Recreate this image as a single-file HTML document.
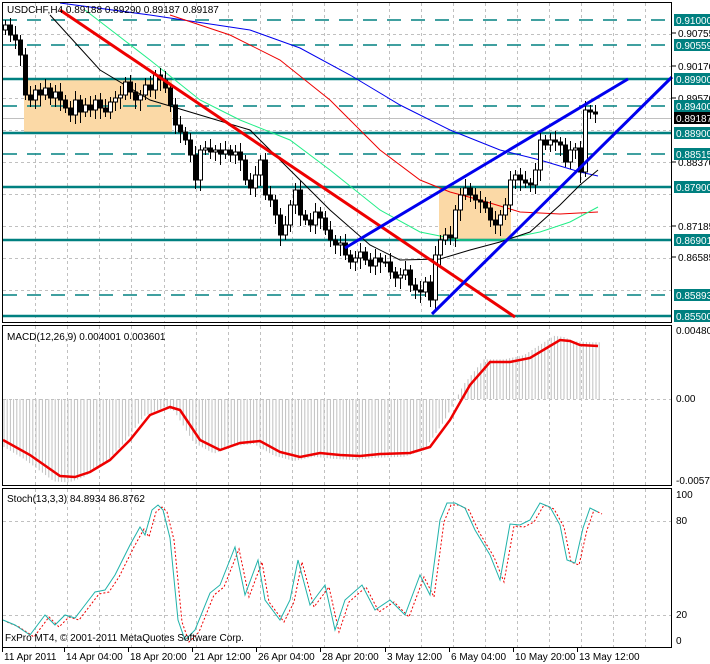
<!DOCTYPE html>
<html><head><meta charset="utf-8">
<style>
html,body{margin:0;padding:0;background:#fff;width:710px;height:664px;overflow:hidden}
svg{display:block}
text{font-family:"Liberation Sans",sans-serif;font-size:10px;fill:#000}
</style></head>
<body>
<svg id="s" width="710" height="664" xmlns="http://www.w3.org/2000/svg">
<rect x="0" y="0" width="710" height="664" fill="#fff"/>
<g id="grid"></g>
<!-- orange boxes -->
<rect x="24" y="79" width="148" height="54" fill="#fbd9a6"/>
<rect x="439" y="187" width="72" height="53" fill="#fbd9a6"/>
<g id="levels"></g>
<g id="mas" fill="none" stroke-width="1">
<polyline stroke="#0000ee" points="60,3 150,15 250,30 300,48 350,75 400,105 450,130 500,150 540,160 580,172 598,176"/>
<polyline stroke="#ee0000" points="170,15 230,35 280,60 330,100 380,150 420,180 450,192 480,200 520,212 560,214 598,212"/>
<polyline stroke="#22ee88" points="85,10 150,60 200,100 240,120 290,140 330,170 380,210 420,232 460,240 500,240 540,232 570,222 598,207"/>
<polyline stroke="#000" points="50,15 100,70 150,100 200,115 250,130 290,170 330,210 370,245 400,260 440,259 470,250 500,242 530,232 560,205 580,185 598,170"/>
</g>
<g id="candles"></g>
<!-- trend lines -->
<line x1="60" y1="10" x2="515" y2="317" stroke="#ee0000" stroke-width="3"/>
<line x1="345" y1="248" x2="628" y2="79" stroke="#0000ee" stroke-width="3"/>
<line x1="432" y1="314" x2="672" y2="77" stroke="#0000ee" stroke-width="3"/>
<g id="macd"></g>
<g id="stoch"></g>
<!-- panel borders -->
<rect x="2.5" y="2.5" width="669" height="320" fill="none" stroke="#000"/>
<rect x="2.5" y="325.5" width="669" height="160" fill="none" stroke="#000"/>
<rect x="2.5" y="488.5" width="669" height="159" fill="none" stroke="#000"/>
<text x="7" y="13">USDCHF,H4  0.89188 0.89290 0.89187 0.89187</text>
<text x="7" y="340">MACD(12,26,9) 0.004001 0.003601</text>
<text x="7" y="502">Stoch(13,3,3) 84.8934 86.8762</text>
<text x="5" y="641">FxPro MT4, © 2001-2011 MetaQuotes Software Corp.</text>
<g id="axis"></g>
</svg>
<script>
var NS="http://www.w3.org/2000/svg";
function el(p,t,a,txt){var e=document.createElementNS(NS,t);for(var k in a)e.setAttribute(k,a[k]);if(txt!==undefined)e.textContent=txt;document.getElementById(p).appendChild(e);return e;}
// vertical grid
var vx=[35,67,99,131,164,196,228,260,292,324,357,389,421,453,485,517,549,581,613,645];
vx.forEach(function(x){
 [[3,322],[326,485],[489,647]].forEach(function(r){el("grid","line",{x1:x+.5,y1:r[0],x2:x+.5,y2:r[1],stroke:"#c0c0c0","stroke-dasharray":"3,3"});});
});
[34,66,98,130,162,194,226,258,290].forEach(function(y){el("grid","line",{x1:3,y1:y+.5,x2:671,y2:y+.5,stroke:"#c0c0c0","stroke-dasharray":"3,3"});});
el("grid","line",{x1:3,y1:118.5,x2:671,y2:118.5,stroke:"#c0c0c0"});
[399,521,615].forEach(function(y){el("grid","line",{x1:3,y1:y+.5,x2:671,y2:y+.5,stroke:"#c0c0c0","stroke-dasharray":"3,3"});});
// levels
[79,133,187,240,316].forEach(function(y){el("levels","line",{x1:3,y1:y,x2:671,y2:y,stroke:"#008080","stroke-width":2.5});});
[20,45,106,154,295].forEach(function(y){el("levels","line",{x1:3,y1:y,x2:671,y2:y,stroke:"#008080","stroke-width":1.5,"stroke-dasharray":"14,10"});});
// candles
var pts=[[5,25],[10,35],[15,40],[20,55],[25,95],[30,100],[35,90],[40,95],[45,88],[50,98],[55,92],[60,100],[65,108],[70,115],[75,100],[80,112],[85,105],[90,110],[95,100],[100,108],[105,112],[110,102],[115,98],[120,95],[125,82],[130,92],[135,100],[140,95],[145,85],[150,90],[155,75],[160,80],[165,88],[170,105],[175,125],[180,132],[185,140],[190,155],[195,180],[200,150],[205,148],[210,152],[215,150],[220,154],[225,150],[230,155],[235,152],[240,160],[245,180],[250,188],[255,175],[260,160],[265,195],[270,200],[275,215],[280,235],[285,225],[290,205],[295,190],[300,215],[305,220],[310,225],[315,212],[320,218],[325,230],[330,240],[335,245],[340,243],[345,255],[350,262],[355,258],[360,252],[365,260],[370,266],[375,258],[380,262],[385,262],[390,272],[395,278],[400,275],[405,270],[410,285],[415,290],[420,292],[425,282],[430,300],[435,255],[440,240],[445,235],[450,238],[455,210],[460,195],[465,188],[470,195],[475,200],[480,202],[485,208],[490,220],[495,225],[500,215],[505,205],[510,180],[515,175],[520,180],[525,183],[530,185],[535,170],[540,140],[545,145],[550,140],[555,142],[560,145],[565,162],[570,150],[575,148],[580,172],[585,110],[590,112],[595,114]];
var prev=pts[0][1]+5;
pts.forEach(function(p,i){
 var o=prev,c=p[1],x=p[0];var top=Math.min(o,c),bot=Math.max(o,c);
 el("candles","line",{x1:x+.5,y1:top-5-(i%3)*2,x2:x+.5,y2:bot+5+(i%4)*2,stroke:"#000"});
 var h=Math.max(bot-top,1);
 el("candles","rect",{x:x-1.5,y:top,width:4,height:h,fill:(c>o?"#000":"#fff"),stroke:"#000","stroke-width":1});
 prev=c;
});
// MACD
var sig=[[3,440],[30,455],[60,476],[75,477],[90,472],[110,460],[130,440],[150,415],[170,407],[180,410],[200,440],[220,450],[240,443],[260,441],[280,452],[300,457],[320,453],[340,455],[360,456],[380,454],[410,453],[430,447],[450,420],[470,385],[490,362],[510,362],[530,358],[545,349],[560,340],[570,341],[580,345],[598,346]];
function interp(arr,x){for(var i=0;i<arr.length-1;i++){if(x>=arr[i][0]&&x<=arr[i+1][0]){var t=(x-arr[i][0])/(arr[i+1][0]-arr[i][0]);return arr[i][1]+t*(arr[i+1][1]-arr[i][1]);}}return x<arr[0][0]?arr[0][1]:arr[arr.length-1][1];}
for(var x=4;x<=600;x+=3.2){var v=interp(sig,x+6);var y=399+(v-399)*1.07;el("macd","line",{x1:x,y1:399,x2:x,y2:y,stroke:"#c0c0c0"});}
el("macd","polyline",{points:sig.map(function(p){return p.join(",")}).join(" "),fill:"none",stroke:"#ee0000","stroke-width":2.5});
// Stoch
var st=[[3,620],[15,625],[30,635],[45,615],[55,625],[65,615],[75,618],[85,605],[95,592],[105,590],[115,575],[125,555],[130,545],[140,527],[145,535],[152,510],[158,505],[163,510],[170,538],[178,620],[185,640],[195,630],[210,593],[220,585],[235,547],[245,595],[258,560],[265,600],[280,620],[290,600],[298,560],[310,605],[325,585],[335,630],[345,600],[362,585],[375,610],[390,600],[405,615],[420,575],[430,595],[440,520],[447,503],[455,503],[465,508],[475,530],[490,555],[500,580],[510,524],[520,525],[530,520],[540,503],[550,507],[560,525],[567,560],[575,563],[583,528],[590,508],[598,512]];
el("stoch","polyline",{points:st.map(function(p){return (p[0]+4)+","+(p[1]+2)}).join(" "),fill:"none",stroke:"#ee0000","stroke-dasharray":"2,2"});
el("stoch","polyline",{points:st.map(function(p){return p.join(",")}).join(" "),fill:"none",stroke:"#20b2aa"});
// axis
var ax=[["0.90755",33],["0.90170",66],["0.89570",98],["0.88370",162],["0.87185",226],["0.86585",257]];
ax.forEach(function(a){el("axis","line",{x1:672,y1:a[1],x2:676,y2:a[1],stroke:"#000"});el("axis","text",{x:678,y:a[1]+4},a[0]);});
var bx=[["0.91000",20],["0.90559",45],["0.89900",79],["0.89400",106],["0.88900",133],["0.88515",154],["0.87900",187],["0.86901",240],["0.85893",295],["0.85500",316]];
bx.forEach(function(a){el("axis","rect",{x:674,y:a[1]-6,width:36,height:12,fill:"#008080"});el("axis","text",{x:676,y:a[1]+4,style:"fill:#fff"},a[0]);});
el("axis","rect",{x:674,y:112,width:36,height:12,fill:"#000"});el("axis","text",{x:676,y:122,style:"fill:#fff"},"0.89187");
[["0.00480",334],["0.00",402],["-0.00574",484],["100",498],["80",524],["20",618],["0",644]].forEach(function(a){el("axis","text",{x:676,y:a[1]},a[0]);});
[["11 Apr 2011",4],["14 Apr 04:00",66],["18 Apr 20:00",130],["21 Apr 12:00",194],["26 Apr 04:00",258],["28 Apr 20:00",322],["3 May 12:00",387],["6 May 04:00",451],["10 May 20:00",515],["13 May 12:00",579]].forEach(function(a){el("axis","text",{x:a[1],y:660},a[0]);el("axis","line",{x1:a[1]-1.5,y1:648,x2:a[1]-1.5,y2:652,stroke:"#000"});});
</script>
</body></html>
